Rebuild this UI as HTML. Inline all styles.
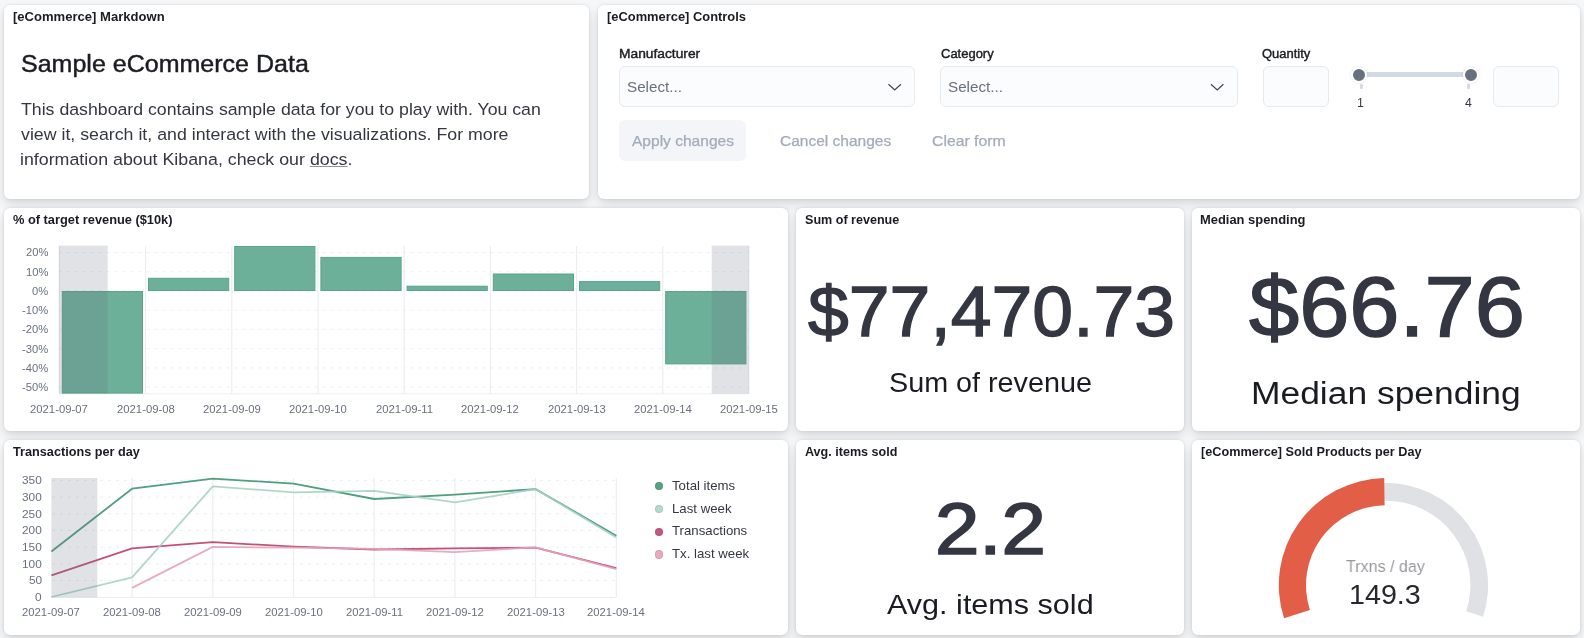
<!DOCTYPE html><html><head><meta charset="utf-8"><style>
html,body{margin:0;padding:0}
body{width:1584px;height:638px;position:relative;overflow:hidden;background:#f6f7f9;font-family:"Liberation Sans",sans-serif}
.p{position:absolute;background:#fff;border-radius:6px;box-shadow:0 0 3px rgba(0,0,0,.1),0 3px 8px rgba(0,0,0,.08),0 8px 14px rgba(0,0,0,.06)}
.t{position:absolute;white-space:nowrap;transform-origin:0 0;will-change:transform}
.box{position:absolute;box-sizing:border-box;border:1px solid #e6e9f0;background:#fbfcfd;border-radius:6px}
svg{position:absolute;left:0;top:0}
</style></head><body>
<div class="p" style="left:4px;top:4.5px;width:585px;height:194.5px"></div>
<div class="p" style="left:598px;top:4.5px;width:982px;height:194.5px"></div>
<div class="p" style="left:4px;top:207.5px;width:784px;height:223.5px"></div>
<div class="p" style="left:796px;top:207.5px;width:388px;height:223.5px"></div>
<div class="p" style="left:1192px;top:207.5px;width:388px;height:223.5px"></div>
<div class="p" style="left:4px;top:440px;width:784px;height:194.5px"></div>
<div class="p" style="left:796px;top:440px;width:388px;height:194.5px"></div>
<div class="p" style="left:1192px;top:440px;width:388px;height:194.5px"></div>
<div class="t" style="left:12.82px;top:11.00px;font-size:12.5px;line-height:12.5px;font-weight:700;color:#1a1c21;transform:scaleX(1.0444);">[eCommerce] Markdown</div>
<div class="t" style="left:606.83px;top:11.00px;font-size:12.5px;line-height:12.5px;font-weight:700;color:#1a1c21;transform:scaleX(1.0315);">[eCommerce] Controls</div>
<div class="t" style="left:13.44px;top:214.00px;font-size:12.5px;line-height:12.5px;font-weight:700;color:#1a1c21;transform:scaleX(1.0251);">% of target revenue ($10k)</div>
<div class="t" style="left:804.62px;top:214.00px;font-size:12.5px;line-height:12.5px;font-weight:700;color:#1a1c21;transform:scaleX(1.0054);">Sum of revenue</div>
<div class="t" style="left:1199.90px;top:214.00px;font-size:12.5px;line-height:12.5px;font-weight:700;color:#1a1c21;transform:scaleX(1.0331);">Median spending</div>
<div class="t" style="left:12.87px;top:446.00px;font-size:12.5px;line-height:12.5px;font-weight:700;color:#1a1c21;transform:scaleX(1.0146);">Transactions per day</div>
<div class="t" style="left:804.62px;top:446.00px;font-size:12.5px;line-height:12.5px;font-weight:700;color:#1a1c21;transform:scaleX(1.0050);">Avg. items sold</div>
<div class="t" style="left:1200.64px;top:446.00px;font-size:12.5px;line-height:12.5px;font-weight:700;color:#1a1c21;transform:scaleX(1.0142);">[eCommerce] Sold Products per Day</div>
<div class="t" style="left:20.78px;top:52.00px;font-size:24.4px;line-height:24.4px;color:#1a1c21;transform:scaleX(1.0258);-webkit-text-stroke:0.45px #1a1c21;">Sample eCommerce Data</div>
<div class="t" style="left:21.11px;top:102.00px;font-size:16.9px;line-height:16.9px;color:#343741;transform:scaleX(1.0485);">This dashboard contains sample data for you to play with. You can</div>
<div class="t" style="left:21.37px;top:127.00px;font-size:16.9px;line-height:16.9px;color:#343741;transform:scaleX(1.0511);">view it, search it, and interact with the visualizations. For more</div>
<div class="t" style="left:20.31px;top:152.00px;font-size:16.9px;line-height:16.9px;color:#343741;transform:scaleX(1.0537);">information about Kibana, check our <span style="text-decoration:underline;text-underline-offset:1px;text-decoration-color:#8f929a">docs</span>.</div>
<div class="t" style="left:618.50px;top:48.00px;font-size:12.3px;line-height:12.3px;color:#1a1c21;transform:scaleX(1.1207);-webkit-text-stroke:0.4px #1a1c21;">Manufacturer</div>
<div class="t" style="left:940.55px;top:48.00px;font-size:12.3px;line-height:12.3px;color:#1a1c21;transform:scaleX(1.0560);-webkit-text-stroke:0.4px #1a1c21;">Category</div>
<div class="t" style="left:1262.45px;top:48.00px;font-size:12.3px;line-height:12.3px;color:#1a1c21;transform:scaleX(1.0560);-webkit-text-stroke:0.4px #1a1c21;">Quantity</div>
<div class="box" style="left:619px;top:66px;width:295.5px;height:41px"></div>
<div class="box" style="left:940px;top:66px;width:297.5px;height:41px"></div>
<div class="box" style="left:1263px;top:66px;width:65.5px;height:41px"></div>
<div class="box" style="left:1493px;top:66px;width:65.5px;height:41px"></div>
<div class="t" style="left:626.94px;top:80.00px;font-size:14.5px;line-height:14.5px;color:#69707d;transform:scaleX(1.0500);">Select...</div>
<div class="t" style="left:948.14px;top:80.00px;font-size:14.5px;line-height:14.5px;color:#69707d;transform:scaleX(1.0500);">Select...</div>
<svg width="1584" height="120" style="overflow:visible"><path d="M888.5 84.3 L894.7 90 L900.9000000000001 84.3" fill="none" stroke="#3f444f" stroke-width="1.2"/></svg>
<svg width="1584" height="120" style="overflow:visible"><path d="M1211.0 84.3 L1217.2 90 L1223.4 84.3" fill="none" stroke="#3f444f" stroke-width="1.2"/></svg>
<div style="position:absolute;left:1359px;top:72px;width:112px;height:5px;background:#d3dae6;border-radius:3px"></div>
<div style="position:absolute;left:1359.5px;top:84px;width:3px;height:4.5px;background:#d3dae6;border-radius:1px"></div>
<div style="position:absolute;left:1467.0px;top:84px;width:3px;height:4.5px;background:#d3dae6;border-radius:1px"></div>
<div style="position:absolute;left:1351.1px;top:66.9px;width:12px;height:12px;border:2px solid #fff;border-radius:50%;background:#69707d;box-shadow:0 0 3px rgba(0,0,0,.12)"></div>
<div style="position:absolute;left:1462.9px;top:66.9px;width:12px;height:12px;border:2px solid #fff;border-radius:50%;background:#69707d;box-shadow:0 0 3px rgba(0,0,0,.12)"></div>
<div class="t" style="left:1357.44px;top:97.00px;font-size:12.3px;line-height:12.3px;color:#343741;">1</div>
<div class="t" style="left:1465.12px;top:97.00px;font-size:12.3px;line-height:12.3px;color:#343741;">4</div>
<div style="position:absolute;left:619px;top:120px;width:127px;height:41px;background:#f4f5f8;border-radius:6px"></div>
<div class="t" style="left:632.13px;top:134.00px;font-size:14.5px;line-height:14.5px;color:#a2abba;transform:scaleX(1.0719);-webkit-text-stroke:0.25px #a2abba;">Apply changes</div>
<div class="t" style="left:779.63px;top:134.00px;font-size:14.5px;line-height:14.5px;color:#a2abba;transform:scaleX(1.0689);-webkit-text-stroke:0.25px #a2abba;">Cancel changes</div>
<div class="t" style="left:932.12px;top:134.00px;font-size:14.5px;line-height:14.5px;color:#a2abba;transform:scaleX(1.0868);-webkit-text-stroke:0.25px #a2abba;">Clear form</div>
<div class="t" style="left:25.77px;top:247.00px;font-size:11.2px;line-height:11.2px;color:#69707d;">20%</div>
<div class="t" style="left:25.77px;top:267.00px;font-size:11.2px;line-height:11.2px;color:#69707d;">10%</div>
<div class="t" style="left:32.02px;top:286.00px;font-size:11.2px;line-height:11.2px;color:#69707d;">0%</div>
<div class="t" style="left:22.15px;top:305.00px;font-size:11.2px;line-height:11.2px;color:#69707d;">-10%</div>
<div class="t" style="left:22.15px;top:324.00px;font-size:11.2px;line-height:11.2px;color:#69707d;">-20%</div>
<div class="t" style="left:22.15px;top:344.00px;font-size:11.2px;line-height:11.2px;color:#69707d;">-30%</div>
<div class="t" style="left:22.15px;top:363.00px;font-size:11.2px;line-height:11.2px;color:#69707d;">-40%</div>
<div class="t" style="left:22.15px;top:382.00px;font-size:11.2px;line-height:11.2px;color:#69707d;">-50%</div>
<div class="t" style="left:30.49px;top:404.00px;font-size:11.2px;line-height:11.2px;color:#69707d;transform:scaleX(1.0100);">2021-09-07</div>
<div class="t" style="left:116.69px;top:404.00px;font-size:11.2px;line-height:11.2px;color:#69707d;transform:scaleX(1.0100);">2021-09-08</div>
<div class="t" style="left:202.89px;top:404.00px;font-size:11.2px;line-height:11.2px;color:#69707d;transform:scaleX(1.0100);">2021-09-09</div>
<div class="t" style="left:289.03px;top:404.00px;font-size:11.2px;line-height:11.2px;color:#69707d;transform:scaleX(1.0100);">2021-09-10</div>
<div class="t" style="left:375.67px;top:404.00px;font-size:11.2px;line-height:11.2px;color:#69707d;transform:scaleX(1.0100);">2021-09-11</div>
<div class="t" style="left:461.49px;top:404.00px;font-size:11.2px;line-height:11.2px;color:#69707d;transform:scaleX(1.0100);">2021-09-12</div>
<div class="t" style="left:547.69px;top:404.00px;font-size:11.2px;line-height:11.2px;color:#69707d;transform:scaleX(1.0100);">2021-09-13</div>
<div class="t" style="left:633.76px;top:404.00px;font-size:11.2px;line-height:11.2px;color:#69707d;transform:scaleX(1.0100);">2021-09-14</div>
<div class="t" style="left:720.09px;top:404.00px;font-size:11.2px;line-height:11.2px;color:#69707d;transform:scaleX(1.0100);">2021-09-15</div>
<svg width="1584" height="638"><line x1="59" y1="252.5" x2="749" y2="252.5" stroke="#edeff2" stroke-width="1" stroke-dasharray="3 5"/><line x1="59" y1="271.74" x2="749" y2="271.74" stroke="#edeff2" stroke-width="1" stroke-dasharray="3 5"/><line x1="59" y1="290.98" x2="749" y2="290.98" stroke="#edeff2" stroke-width="1" stroke-dasharray="3 5"/><line x1="59" y1="310.22" x2="749" y2="310.22" stroke="#edeff2" stroke-width="1" stroke-dasharray="3 5"/><line x1="59" y1="329.46" x2="749" y2="329.46" stroke="#edeff2" stroke-width="1" stroke-dasharray="3 5"/><line x1="59" y1="348.7" x2="749" y2="348.7" stroke="#edeff2" stroke-width="1" stroke-dasharray="3 5"/><line x1="59" y1="367.94" x2="749" y2="367.94" stroke="#edeff2" stroke-width="1" stroke-dasharray="3 5"/><line x1="59" y1="387.17999999999995" x2="749" y2="387.17999999999995" stroke="#edeff2" stroke-width="1" stroke-dasharray="3 5"/><line x1="59.4" y1="246" x2="59.4" y2="394" stroke="#eceef2" stroke-width="1.2"/><line x1="145.6" y1="246" x2="145.6" y2="394" stroke="#eceef2" stroke-width="1.2"/><line x1="231.8" y1="246" x2="231.8" y2="394" stroke="#eceef2" stroke-width="1.2"/><line x1="318.0" y1="246" x2="318.0" y2="394" stroke="#eceef2" stroke-width="1.2"/><line x1="404.2" y1="246" x2="404.2" y2="394" stroke="#eceef2" stroke-width="1.2"/><line x1="490.4" y1="246" x2="490.4" y2="394" stroke="#eceef2" stroke-width="1.2"/><line x1="576.6" y1="246" x2="576.6" y2="394" stroke="#eceef2" stroke-width="1.2"/><line x1="662.8" y1="246" x2="662.8" y2="394" stroke="#eceef2" stroke-width="1.2"/><line x1="749.0" y1="246" x2="749.0" y2="394" stroke="#eceef2" stroke-width="1.2"/><line x1="59" y1="393.8" x2="749" y2="393.8" stroke="#eceef2" stroke-width="1"/><rect x="62.3" y="291.5" width="80.2" height="101.60000000000002" fill="#6db09a" stroke="#58a68b" stroke-width="1"/><rect x="148.5" y="278.3" width="80.20000000000002" height="12.199999999999989" fill="#6db09a" stroke="#58a68b" stroke-width="1"/><rect x="234.70000000000002" y="246.5" width="80.19999999999996" height="44" fill="#6db09a" stroke="#58a68b" stroke-width="1"/><rect x="320.9" y="257.4" width="80.19999999999999" height="33.10000000000002" fill="#6db09a" stroke="#58a68b" stroke-width="1"/><rect x="407.09999999999997" y="286.2" width="80.19999999999999" height="4.300000000000011" fill="#6db09a" stroke="#58a68b" stroke-width="1"/><rect x="493.29999999999995" y="274.0" width="80.20000000000005" height="16.5" fill="#6db09a" stroke="#58a68b" stroke-width="1"/><rect x="579.5" y="281.6" width="80.19999999999993" height="8.899999999999977" fill="#6db09a" stroke="#58a68b" stroke-width="1"/><rect x="665.6999999999999" y="291.5" width="80.20000000000005" height="72.39999999999998" fill="#6db09a" stroke="#58a68b" stroke-width="1"/><rect x="58.8" y="245.6" width="48.9" height="148" fill="rgba(105,112,125,0.2)"/><rect x="711.7" y="245.6" width="37.3" height="148" fill="rgba(105,112,125,0.2)"/></svg>
<div class="t" style="left:21.92px;top:475.00px;font-size:11.2px;line-height:11.2px;color:#69707d;transform:scaleX(1.0600);">350</div>
<div class="t" style="left:21.92px;top:492.00px;font-size:11.2px;line-height:11.2px;color:#69707d;transform:scaleX(1.0600);">300</div>
<div class="t" style="left:21.92px;top:509.00px;font-size:11.2px;line-height:11.2px;color:#69707d;transform:scaleX(1.0600);">250</div>
<div class="t" style="left:21.92px;top:525.00px;font-size:11.2px;line-height:11.2px;color:#69707d;transform:scaleX(1.0600);">200</div>
<div class="t" style="left:21.92px;top:542.00px;font-size:11.2px;line-height:11.2px;color:#69707d;transform:scaleX(1.0600);">150</div>
<div class="t" style="left:21.92px;top:559.00px;font-size:11.2px;line-height:11.2px;color:#69707d;transform:scaleX(1.0600);">100</div>
<div class="t" style="left:28.55px;top:575.00px;font-size:11.2px;line-height:11.2px;color:#69707d;transform:scaleX(1.0600);">50</div>
<div class="t" style="left:35.17px;top:592.00px;font-size:11.2px;line-height:11.2px;color:#69707d;transform:scaleX(1.0600);">0</div>
<div class="t" style="left:22.49px;top:607.00px;font-size:11.2px;line-height:11.2px;color:#69707d;transform:scaleX(1.0100);">2021-09-07</div>
<div class="t" style="left:103.19px;top:607.00px;font-size:11.2px;line-height:11.2px;color:#69707d;transform:scaleX(1.0100);">2021-09-08</div>
<div class="t" style="left:183.89px;top:607.00px;font-size:11.2px;line-height:11.2px;color:#69707d;transform:scaleX(1.0100);">2021-09-09</div>
<div class="t" style="left:264.53px;top:607.00px;font-size:11.2px;line-height:11.2px;color:#69707d;transform:scaleX(1.0100);">2021-09-10</div>
<div class="t" style="left:345.67px;top:607.00px;font-size:11.2px;line-height:11.2px;color:#69707d;transform:scaleX(1.0100);">2021-09-11</div>
<div class="t" style="left:425.99px;top:607.00px;font-size:11.2px;line-height:11.2px;color:#69707d;transform:scaleX(1.0100);">2021-09-12</div>
<div class="t" style="left:506.69px;top:607.00px;font-size:11.2px;line-height:11.2px;color:#69707d;transform:scaleX(1.0100);">2021-09-13</div>
<div class="t" style="left:587.26px;top:607.00px;font-size:11.2px;line-height:11.2px;color:#69707d;transform:scaleX(1.0100);">2021-09-14</div>
<svg width="1584" height="638"><line x1="52" y1="480.4" x2="616" y2="480.4" stroke="#edeff2" stroke-width="1" stroke-dasharray="3 5"/><line x1="52" y1="497.08" x2="616" y2="497.08" stroke="#edeff2" stroke-width="1" stroke-dasharray="3 5"/><line x1="52" y1="513.76" x2="616" y2="513.76" stroke="#edeff2" stroke-width="1" stroke-dasharray="3 5"/><line x1="52" y1="530.4399999999999" x2="616" y2="530.4399999999999" stroke="#edeff2" stroke-width="1" stroke-dasharray="3 5"/><line x1="52" y1="547.12" x2="616" y2="547.12" stroke="#edeff2" stroke-width="1" stroke-dasharray="3 5"/><line x1="52" y1="563.8" x2="616" y2="563.8" stroke="#edeff2" stroke-width="1" stroke-dasharray="3 5"/><line x1="52" y1="580.48" x2="616" y2="580.48" stroke="#edeff2" stroke-width="1" stroke-dasharray="3 5"/><line x1="132.1" y1="478" x2="132.1" y2="597.5" stroke="#eceef2" stroke-width="1.2"/><line x1="212.8" y1="478" x2="212.8" y2="597.5" stroke="#eceef2" stroke-width="1.2"/><line x1="293.5" y1="478" x2="293.5" y2="597.5" stroke="#eceef2" stroke-width="1.2"/><line x1="374.2" y1="478" x2="374.2" y2="597.5" stroke="#eceef2" stroke-width="1.2"/><line x1="454.9" y1="478" x2="454.9" y2="597.5" stroke="#eceef2" stroke-width="1.2"/><line x1="535.6" y1="478" x2="535.6" y2="597.5" stroke="#eceef2" stroke-width="1.2"/><line x1="616.3" y1="478" x2="616.3" y2="597.5" stroke="#eceef2" stroke-width="1.2"/><line x1="51.4" y1="597.4" x2="616.3" y2="597.4" stroke="#eceef2" stroke-width="1"/><path d="M51.4 551.5 L132.1 488.7 L212.8 478.6 L293.5 483.7 L374.2 499.0 L454.9 494.6 L535.6 489.1 L616.3 535.7" fill="none" stroke="#509f7e" stroke-width="1.8" stroke-opacity="1.0" stroke-linejoin="round"/><path d="M51.4 575.4 L132.1 548.4 L212.8 542.2 L293.5 546.6 L374.2 549.5 L454.9 548.4 L535.6 547.7 L616.3 568.1" fill="none" stroke="#c0527a" stroke-width="1.8" stroke-opacity="1.0" stroke-linejoin="round"/><path d="M51.4 597.0 L132.1 577.4 L212.8 486.3 L293.5 492.4 L374.2 490.9 L454.9 502.3 L535.6 489.1 L616.3 537.4" fill="none" stroke="#a6d3c2" stroke-width="1.8" stroke-opacity="0.9" stroke-linejoin="round"/><path d="M132.1 587.9 L212.8 546.9 L293.5 547.7 L374.2 548.8 L454.9 552.1 L535.6 547.3 L616.3 569.2" fill="none" stroke="#e3a3ba" stroke-width="1.8" stroke-opacity="0.9" stroke-linejoin="round"/><rect x="51.4" y="478" width="45.9" height="119.4" fill="rgba(105,112,125,0.2)"/></svg>
<div style="position:absolute;left:654.9px;top:481.90000000000003px;width:8.4px;height:8.4px;border-radius:50%;background:#54a383;box-shadow:inset 0 0 0 1px rgba(0,0,0,.08)"></div>
<div class="t" style="left:672.34px;top:480.00px;font-size:12.6px;line-height:12.6px;color:#343741;transform:scaleX(1.0500);">Total items</div>
<div style="position:absolute;left:654.9px;top:504.73px;width:8.4px;height:8.4px;border-radius:50%;background:#b3dacb;box-shadow:inset 0 0 0 1px rgba(0,0,0,.08)"></div>
<div class="t" style="left:671.55px;top:503.00px;font-size:12.6px;line-height:12.6px;color:#343741;transform:scaleX(1.0500);">Last week</div>
<div style="position:absolute;left:654.9px;top:527.56px;width:8.4px;height:8.4px;border-radius:50%;background:#c4577f;box-shadow:inset 0 0 0 1px rgba(0,0,0,.08)"></div>
<div class="t" style="left:672.34px;top:525.00px;font-size:12.6px;line-height:12.6px;color:#343741;transform:scaleX(1.0500);">Transactions</div>
<div style="position:absolute;left:654.9px;top:550.39px;width:8.4px;height:8.4px;border-radius:50%;background:#e8aac1;box-shadow:inset 0 0 0 1px rgba(0,0,0,.08)"></div>
<div class="t" style="left:672.34px;top:548.00px;font-size:12.6px;line-height:12.6px;color:#343741;transform:scaleX(1.0500);">Tx. last week</div>
<div class="t" style="left:807.59px;top:278.00px;font-size:69.8px;line-height:69.8px;color:#343741;transform:scaleX(1.0510);-webkit-text-stroke:1.3px #343741;">$77,470.73</div>
<div class="t" style="left:888.70px;top:369.00px;font-size:27.6px;line-height:27.6px;color:#1a1c21;transform:scaleX(1.0417);">Sum of revenue</div>
<div class="t" style="left:1249.27px;top:265.00px;font-size:84.5px;line-height:84.5px;color:#343741;transform:scaleX(1.0678);-webkit-text-stroke:1.5px #343741;">$66.76</div>
<div class="t" style="left:1250.95px;top:378.00px;font-size:31px;line-height:31px;color:#1a1c21;transform:scaleX(1.1419);">Median spending</div>
<div class="t" style="left:935.14px;top:493.00px;font-size:72.3px;line-height:72.3px;color:#343741;transform:scaleX(1.1031);-webkit-text-stroke:1.7px #343741;">2.2</div>
<div class="t" style="left:887.46px;top:591.00px;font-size:28px;line-height:28px;color:#1a1c21;transform:scaleX(1.0914);">Avg. items sold</div>
<svg width="1584" height="638"><path d="M1384.12 483.02 A102.2 102.2 0 0 1 1483.10 616.78 L1466.26 611.31 A84.5 84.5 0 0 0 1384.43 500.71 Z" fill="#dfe1e5"/><path d="M1284.04 618.30 A107.1 107.1 0 0 1 1384.22 478.11 L1384.64 505.31 A79.9 79.9 0 0 0 1309.91 609.89 Z" fill="#e35e47"/></svg>
<div class="t" style="left:1346.15px;top:558.00px;font-size:17.4px;line-height:17.4px;color:#98999d;transform:scaleX(0.9235);">Trxns / day</div>
<div class="t" style="left:1348.62px;top:581.00px;font-size:28px;line-height:28px;color:#26282d;transform:scaleX(1.0247);">149.3</div>
</body></html>
